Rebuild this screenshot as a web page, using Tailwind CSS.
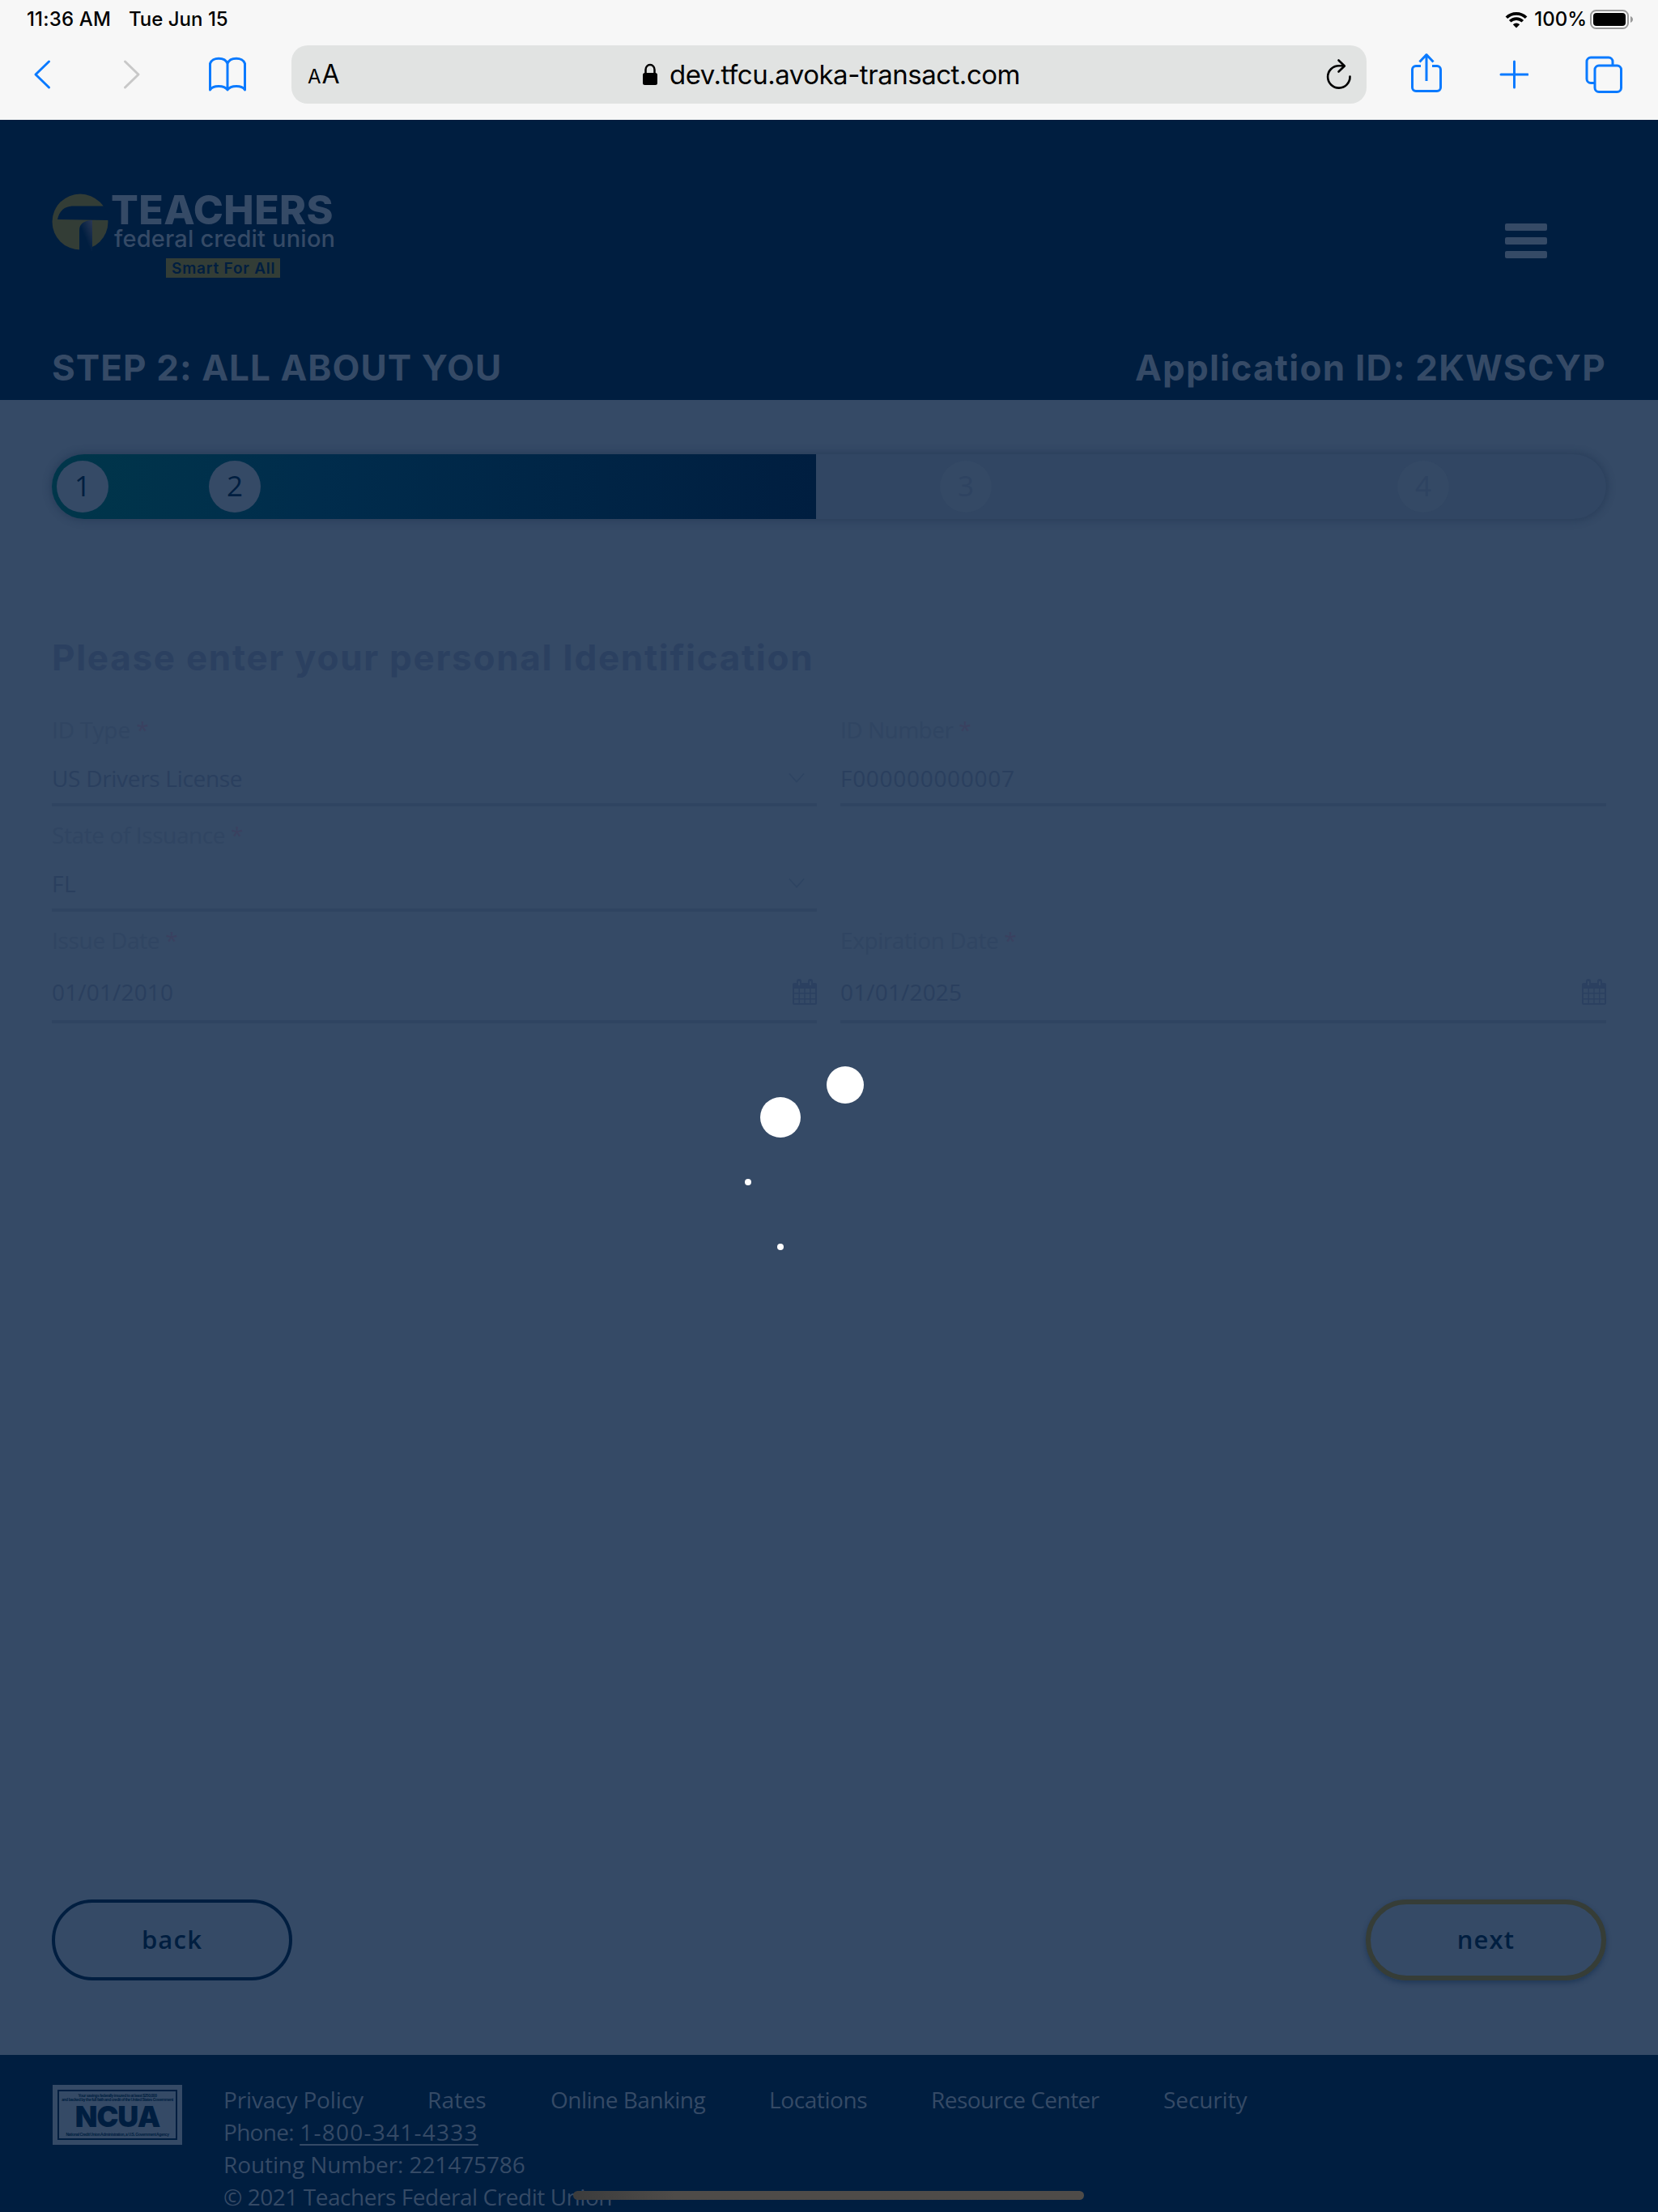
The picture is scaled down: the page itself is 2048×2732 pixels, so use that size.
<!DOCTYPE html>
<html lang="en">
<head>
<meta charset="utf-8">
<title>Teachers Federal Credit Union – Application</title>
<script src="https://cdn.jsdelivr.net/npm/@tailwindcss/browser@4"></script>
</head>
<body class="w-[2048px] h-[2732px] overflow-hidden relative flex flex-col bg-[#354a66] font-['Open_Sans',sans-serif]">
<!-- Browser chrome -->
<div class="h-[148px] shrink-0 bg-[#f7f7f7] text-black font-['Inter',sans-serif]">
  <div class="h-[56px] flex items-start justify-between pl-[33px] pr-[30px] pt-[8px] text-[24px] leading-[32px] font-medium">
    <div class="flex gap-[22px] whitespace-nowrap"><span class="tracking-[0.16px]">11:36 AM</span><span>Tue Jun 15</span></div>
    <div class="flex items-center">
      <svg class="w-[28px] h-[21px]" viewBox="0 0 28 21"><path d="M14 20.5 18.2 16.2A6 6 0 0 0 9.8 16.2Z"/><path d="M6.2 12.3a11 11 0 0 1 15.6 0M1.9 7.8a17.2 17.2 0 0 1 24.2 0" fill="none" stroke="#000" stroke-width="3.7"/></svg>
      <span class="ml-[8px] mr-[4px] whitespace-nowrap">100%</span>
      <svg class="w-[54px] h-[24px]" viewBox="0 0 54 24"><rect x="1" y="1" width="46" height="22" rx="6.5" fill="none" stroke="#999" stroke-width="2"/><rect x="4" y="4" width="40" height="16" rx="4"/><path d="M50 8c4 1.4 4 6.6 0 8z" fill="#999"/></svg>
    </div>
  </div>
  <div class="h-[72px] flex items-center pl-[40px]">
    <svg class="w-[24px] h-[40px]" viewBox="0 0 24 40" fill="none" stroke="#0a7aff" stroke-width="3" stroke-linecap="round" stroke-linejoin="round"><path d="M20.5 4 4 20l16.500 16"/></svg>
    <svg class="w-[24px] h-[40px] ml-[87px]" viewBox="0 0 24 40" fill="none" stroke="#c8c8c8" stroke-width="3" stroke-linecap="round" stroke-linejoin="round"><path d="M3.500 4 20 20 3.500 36"/></svg>
    <svg class="w-[48px] h-[44px] ml-[82px]" viewBox="0 0 48 44" fill="none" stroke="#0a7aff" stroke-width="3" stroke-linejoin="round"><path d="M24 8.500C21 0 5 0 2.500 8.500V41C6 35 20 35 24 41 28 35 42 35 45.500 41V8.500C43 0 27 0 24 8.500V41"/></svg>
    <div class="ml-[55px] w-[1328px] h-[72px] rounded-[20px] bg-[#e1e3e2] flex items-center pl-[20px]">
      <div class="w-[40px] pt-[5px] leading-[40px] whitespace-nowrap"><span class="text-[24px]">A</span><span class="text-[32px] ml-[1px]">A</span></div>
      <svg class="w-[20px] h-[28px] ml-[373px]" viewBox="0 0 20 28"><rect x="1" y="12" width="18" height="15" rx="2.500"/><path d="M4.500 13V8a5.500 6 0 0 1 11 0v5" fill="none" stroke="#000" stroke-width="2.500"/></svg>
      <span class="ml-[14px] text-[33px] leading-[40px] tracking-[-0.48px] whitespace-nowrap">dev.tfcu.avoka-transact.com</span>
      <svg class="w-[36px] h-[40px] ml-auto mr-[16px]" viewBox="0 0 36 40" fill="none" stroke="#000" stroke-width="2.600" stroke-linecap="round" stroke-linejoin="round"><path d="M31.500 22.500A13.700 13.700 0 1 1 17.800 9.200H24M17.500 2.500 24.800 9.500 17.500 16.500"/></svg>
    </div>
    <svg class="w-[40px] h-[50px] ml-[54px] -mt-[4px]" viewBox="0 0 40 50" fill="none" stroke="#0a7aff" stroke-width="3" stroke-linejoin="round"><path d="M13 16.500H7a4.500 4.500 0 0 0-4.500 4.500V43a4.500 4.500 0 0 0 4.500 4.500H33a4.500 4.500 0 0 0 4.500-4.500V21a4.500 4.500 0 0 0-4.500-4.500H27M20 35V3M11.500 11.500 20 2.500 28.500 11.500"/></svg>
    <svg class="w-[36px] h-[36px] ml-[70px]" viewBox="0 0 36 36" fill="none" stroke="#0a7aff" stroke-width="3" stroke-linecap="round"><path d="M18.500 2v32M2 18h33"/></svg>
    <svg class="w-[46px] h-[46px] ml-[70px]" viewBox="0 0 46 46" fill="none" stroke="#0a7aff" stroke-width="3"><path d="M12 33.500H7A5 5 0 0 1 2 28.500V7A5 5 0 0 1 7 2H29A5 5 0 0 1 34 7V12"/><rect x="12" y="12" width="32.500" height="32.500" rx="5"/></svg>
  </div>
</div>
<!-- Site header -->
<header class="h-[346px] shrink-0 bg-[#001e40] text-[#354a66] px-[64px] pt-[90px] flex flex-col font-['Inter',sans-serif]">
  <div class="flex justify-between h-[108px]">
    <div class="flex">
      <svg class="w-[70px] h-[72px]" viewBox="0 0 70 72"><defs><linearGradient id="fold" x1="1" y1="0" x2=".3" y2=".7"><stop offset="0" stop-color="#2b3855"/><stop offset=".8" stop-color="#001e40"/></linearGradient></defs><circle cx="35" cy="36" r="34.500" fill="#333d36"/><path d="M7 33C9 23 15 16.500 27 16.500H65L70 26V34Z" fill="#001e40"/><path d="M34 72V46C34 38 41 34 50 34V72Z" fill="url(#fold)"/></svg>
      <div class="flex flex-col ml-[3px] whitespace-nowrap">
        <div class="text-[50px] leading-[42px] font-extrabold tracking-[0.4px]">TEACHERS</div>
        <div class="text-[29px] leading-[30px] font-medium tracking-[0.2px] ml-[4px]">federal credit union</div>
        <div class="self-start ml-[68px] mt-[9px] w-[141px] h-[24px] bg-[#333d36] text-[#001e40] text-[19px] leading-[25px] font-semibold tracking-[0.8px] pl-[7px]">Smart For All</div>
      </div>
    </div>
    <div class="flex flex-col gap-[8px] mt-[38px] mr-[73px]"><i class="block w-[52px] h-[9px] rounded-[2px] bg-[#354a66]"></i><i class="block w-[52px] h-[9px] rounded-[2px] bg-[#354a66]"></i><i class="block w-[52px] h-[9px] rounded-[2px] bg-[#354a66]"></i></div>
  </div>
  <div class="flex justify-between mt-[83px] text-[44px] leading-[50px] font-bold whitespace-nowrap"><span class="tracking-[1.06px]">STEP 2: ALL ABOUT YOU</span><span class="tracking-[1.27px]">Application ID: 2KWSCYP</span></div>
</header>
<!-- Form -->
<main class="flex-1 px-[64px] pt-[67px] flex flex-col">
  <div class="relative h-[80px] shrink-0 rounded-full bg-[#314663] shadow-[0_0_8px_3px_rgba(30,50,80,.45)] text-[35px] leading-[62px] font-medium text-center">
    <div class="w-[944px] h-[80px] rounded-l-full rounded-r-[3px] bg-linear-to-r from-[#00364a] via-[#002c4c] via-[35%] to-[#001e40]"></div>
    <div class="absolute left-[6px] top-[8px] size-[64px] rounded-full bg-[#354a66] text-[#001e40]">1</div>
    <div class="absolute left-[194px] top-[8px] size-[64px] rounded-full bg-[#354a66] text-[#001e40]">2</div>
    <div class="absolute left-[1097px] top-[8px] size-[64px] rounded-full bg-[#344965] text-[#2e4361]">3</div>
    <div class="absolute left-[1662px] top-[8px] size-[64px] rounded-full bg-[#344965] text-[#2e4361]">4</div>
  </div>
  <h1 class="mt-[146px] h-[50px] text-[44px] leading-[50px] font-bold tracking-[1.72px] text-[#2b4060] font-['Inter',sans-serif] whitespace-nowrap">Please enter your personal Identification</h1>
  <div class="grid grid-cols-[945px_946px] gap-x-[29px] mt-[44px] text-[28px] leading-[40px] font-[380] text-[#2a3f5e] whitespace-nowrap">
    <div class="h-[130px]"><div class="text-[#304562] tracking-[-0.1px]">ID Type <span class="text-[#3a4160]">*</span></div><div class="mt-[20px] pb-[11px] border-b-4 border-[#2f4461] flex justify-between items-center pr-[15px]"><span class="tracking-[-0.3px]">US Drivers License</span><svg class="w-[20px] h-[14px]" viewBox="0 0 22 14" fill="none" stroke="#2e4462" stroke-width="1.600"><path d="M1 1 11 12 21 1"/></svg></div></div>
    <div class="h-[130px]"><div class="text-[#304562] tracking-[-0.5px]">ID Number <span class="text-[#3a4160]">*</span></div><div class="mt-[20px] pb-[11px] border-b-4 border-[#2f4461]"><span class="tracking-[0.7px]">F000000000007</span></div></div>
    <div class="h-[130px]"><div class="text-[#304562] tracking-[-0.4px]">State of Issuance <span class="text-[#3a4160]">*</span></div><div class="mt-[20px] pb-[11px] border-b-4 border-[#2f4461] flex justify-between items-center pr-[15px]"><span class="tracking-[0.5px]">FL</span><svg class="w-[20px] h-[14px]" viewBox="0 0 22 14" fill="none" stroke="#2e4462" stroke-width="1.600"><path d="M1 1 11 12 21 1"/></svg></div></div>
    <div></div>
    <div><div class="text-[#304562] tracking-[-0.3px]">Issue Date <span class="text-[#3a4160]">*</span></div><div class="mt-[24px] pb-[15px] border-b-4 border-[#2f4461] flex justify-between items-center"><span class="tracking-[0.15px]">01/01/2010</span><svg class="w-[30px] h-[32px]" viewBox="0 0 30 32"><path fill="#2b4060" fill-rule="evenodd" d="M2 5H5V3a3 3 0 0 1 6 0V5h8V3a3 3 0 0 1 6 0V5h3a2 2 0 0 1 2 2V30a2 2 0 0 1-2 2H2a2 2 0 0 1-2-2V7A2 2 0 0 1 2 5ZM7 3V8H9V3ZM21 3V8h2V3ZM2 12v5H7.500V12ZM9 12v5h5.300V12ZM15.700 12v5H21V12ZM22.500 12v5H28V12ZM2 18.500V24H7.500V18.500ZM9 18.500V24h5.300V18.500ZM15.700 18.500V24H21V18.500ZM22.500 18.500V24H28V18.500ZM2 25.500V30H7.500V25.500ZM9 25.500V30h5.300V25.500ZM15.700 25.500V30H21V25.500ZM22.500 25.500V30H28V25.500Z"/></svg></div></div>
    <div><div class="text-[#304562] tracking-[-0.4px]">Expiration Date <span class="text-[#3a4160]">*</span></div><div class="mt-[24px] pb-[15px] border-b-4 border-[#2f4461] flex justify-between items-center"><span class="tracking-[0.15px]">01/01/2025</span><svg class="w-[30px] h-[32px]" viewBox="0 0 30 32"><path fill="#2b4060" fill-rule="evenodd" d="M2 5H5V3a3 3 0 0 1 6 0V5h8V3a3 3 0 0 1 6 0V5h3a2 2 0 0 1 2 2V30a2 2 0 0 1-2 2H2a2 2 0 0 1-2-2V7A2 2 0 0 1 2 5ZM7 3V8H9V3ZM21 3V8h2V3ZM2 12v5H7.500V12ZM9 12v5h5.300V12ZM15.700 12v5H21V12ZM22.500 12v5H28V12ZM2 18.500V24H7.500V18.500ZM9 18.500V24h5.300V18.500ZM15.700 18.500V24H21V18.500ZM22.500 18.500V24H28V18.500ZM2 25.500V30H7.500V25.500ZM9 25.500V30h5.300V25.500ZM15.700 25.500V30H21V25.500ZM22.500 25.500V30H28V25.500Z"/></svg></div></div>
  </div>
  <div class="mt-auto mb-[92px] flex justify-between text-[31px] leading-[40px] font-semibold tracking-[1.2px] text-[#001e40] text-center">
    <button class="w-[297px] h-[100px] rounded-full border-4 border-[#001e40] pb-[2px]">back</button>
    <button class="w-[297px] h-[100px] rounded-full border-[6px] border-[#363d37] pb-[2px] shadow-[0_3px_6px_rgba(0,30,64,.4)]">next</button>
  </div>
</main>
<!-- Footer -->
<footer class="h-[194px] shrink-0 bg-[#001e40] text-[#354a66] pl-[65px] pt-[35px] flex text-[28px] leading-[40px] font-[380] whitespace-nowrap">
  <div class="w-[160px] h-[74px] mt-[2px] bg-[#354a66] text-[#001e40] p-[6px] font-['Liberation_Sans',sans-serif]">
    <div class="h-full border-2 border-[#001e40] flex flex-col items-center text-[5px] leading-[5px] font-bold pt-[3px] tracking-[-0.44px]">
      <span>Your savings federally insured to at least $250,000</span><span>and backed by the full faith and credit of the United States Government</span>
      <span class="text-[36px] leading-[36px] font-black font-['Inter',sans-serif] tracking-[-1px]">NCUA</span><span class="mt-[2px]">National Credit Union Administration, a U.S. Government Agency</span>
    </div>
  </div>
  <div class="ml-[51px]">
    <div class="grid grid-cols-[252px_152px_270px_200px_287px_auto]"><span class="tracking-[-0.15px]">Privacy Policy</span><span class="tracking-[0.2px]">Rates</span><span class="tracking-[-0.5px]">Online Banking</span><span class="tracking-[-0.4px]">Locations</span><span class="tracking-[-0.55px]">Resource Center</span><span class="tracking-[-0.1px]">Security</span></div>
    <div><span class="tracking-[-0.7px]">Phone:</span> <span class="underline underline-offset-[4px] decoration-2 tracking-[1.25px]">1-800-341-4333</span></div>
    <div class="tracking-[-0.1px]">Routing Number: 221475786</div>
    <div class="tracking-[-0.45px]">© 2021 Teachers Federal Credit Union</div>
  </div>
</footer>
<!-- Loading spinner -->
<div class="absolute left-[939px] top-[1355px] size-[50px] rounded-full bg-white"></div>
<div class="absolute left-[1021px] top-[1317px] size-[46px] rounded-full bg-white"></div>
<div class="absolute left-[920px] top-[1456px] size-[8px] rounded-full bg-white"></div>
<div class="absolute left-[960px] top-[1536px] size-[8px] rounded-full bg-white"></div>
<!-- Home indicator -->
<div class="absolute left-[708px] top-[2706px] w-[631px] h-[11px] rounded-full bg-linear-to-r from-[#3c3c3c] via-[#4e4b48] via-[20%] to-[#4e4b48]"></div>
</body>
</html>
